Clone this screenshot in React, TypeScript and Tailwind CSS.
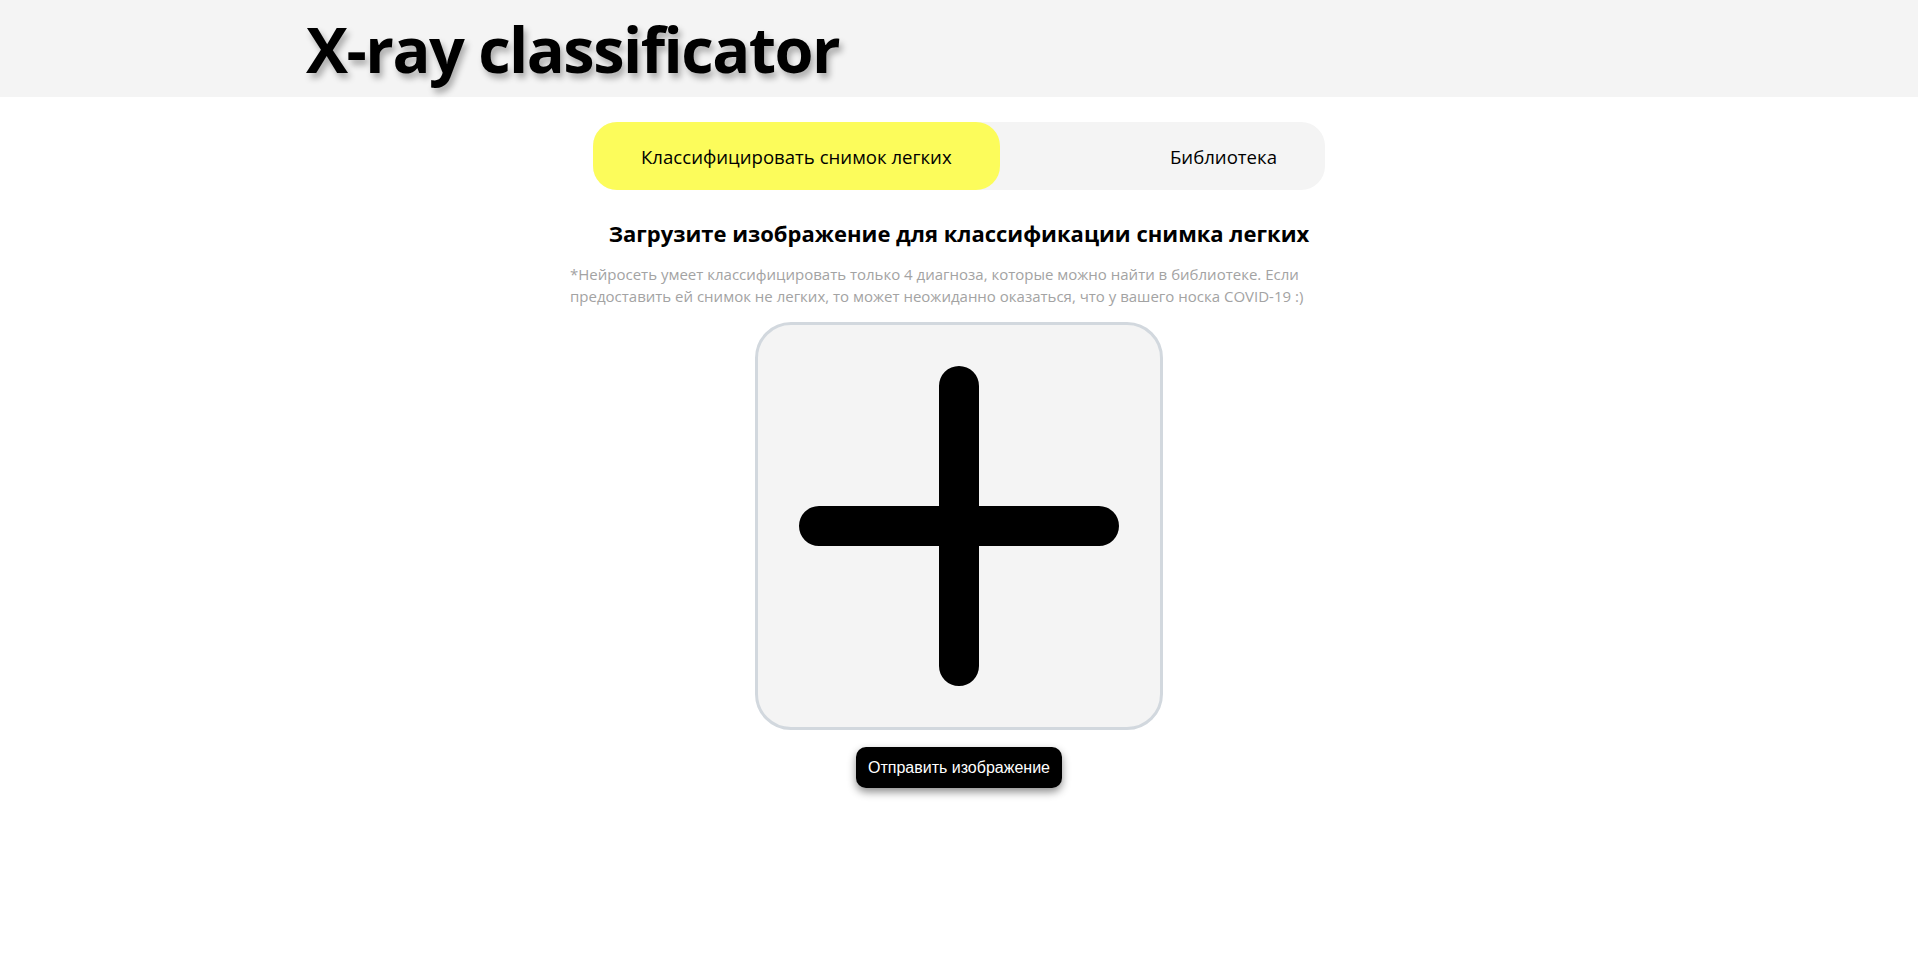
import { useState } from "react";

const tabs = ["Классифицировать снимок легких", "Библиотека"];

function PlusIcon() {
  return (
    <svg width="330" height="330" viewBox="0 0 330 330" fill="none">
      <path
        d="M165 25 V305 M25 165 H305"
        stroke="#000"
        strokeWidth="40"
        strokeLinecap="round"
      />
    </svg>
  );
}

export default function App() {
  const [active, setActive] = useState(0);

  return (
    <div className="min-h-screen bg-white font-['Open_Sans',sans-serif] text-black">
      <header className="h-[97px] bg-[#f4f4f4]">
        <div className="mx-auto w-[1306px]">
          <h1 className="text-[63px] font-bold leading-[97px] tracking-[-1.5px] [text-shadow:3px_5px_6px_rgba(0,0,0,0.3)]">
            X-ray classificator
          </h1>
        </div>
      </header>

      <main className="flex flex-col items-center">
        <nav className="mt-[25px] flex h-[68px] w-[732px] justify-between rounded-3xl bg-[#f4f4f4]">
          {tabs.map((t, i) => (
            <button
              key={t}
              onClick={() => setActive(i)}
              className={
                "rounded-3xl px-12 pt-[2px] text-[18.6px] " +
                (active === i ? "bg-[#fcfc5b]" : "")
              }
            >
              {t}
            </button>
          ))}
        </nav>

        <div className="mt-[27px] w-[778px]">
          <h2 className="text-center text-[22px] font-bold leading-[32px]">
            Загрузите изображение для классификации снимка легких
          </h2>
          <p className="mt-[14px] text-[15px] leading-[22px] text-[#a3a3a3]">
            *Нейросеть умеет классифицировать только 4 диагноза, которые можно
            найти в библиотеке. Если предоставить ей снимок не легких, то может
            неожиданно оказаться, что у вашего носка COVID-19 :)
          </p>
        </div>

        <label className="mt-[15px] flex h-[408px] w-[408px] cursor-pointer items-center justify-center rounded-[36px] border-[3px] border-[#d2d8de] bg-[#f4f4f4]">
          <input type="file" className="hidden" />
          <PlusIcon />
        </label>

        <button className="mt-[17px] h-[41px] rounded-[10px] bg-black px-3 font-['Liberation_Sans',sans-serif] text-[16px] text-white shadow-[0_4px_8px_rgba(0,0,0,0.45)]">
          Отправить изображение
        </button>
      </main>
    </div>
  );
}
